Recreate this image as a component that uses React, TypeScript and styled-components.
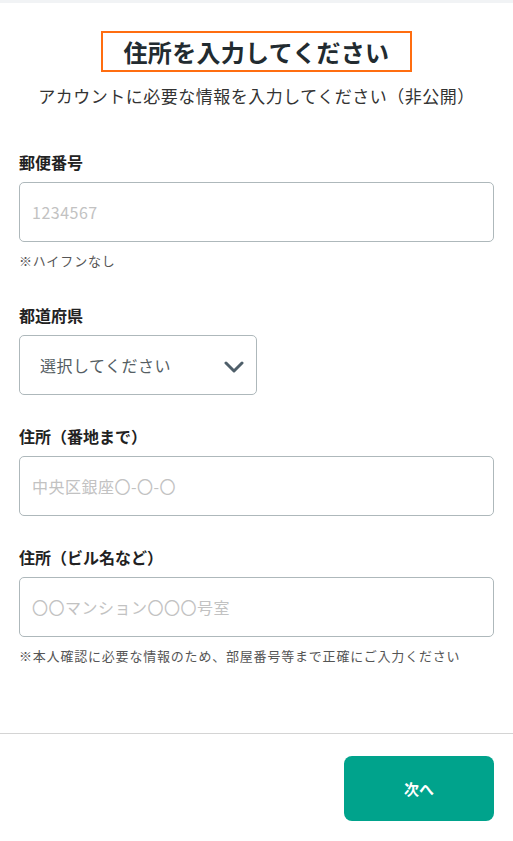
import React from 'react';
import styled, { createGlobalStyle } from 'styled-components';

const GlobalStyle = createGlobalStyle`
  * {
    box-sizing: border-box;
  }
  body {
    margin: 0;
    background: #ffffff;
    font-family: "Noto Sans CJK JP", "Noto Sans", sans-serif;
    color: #222;
  }
`;

const Page = styled.div`
  width: 513px;
  min-height: 841px;
  border-top: 3px solid #f1f3f5;
`;

const Header = styled.header`
  display: flex;
  flex-direction: column;
  align-items: center;
  padding-top: 28px;
`;

const TitleBox = styled.div`
  border: 2px solid #ff6d10;
  height: 41px;
  padding: 0 21px;
  display: flex;
  align-items: center;
`;

const Title = styled.h1`
  margin: 0;
  font-size: 24px;
  font-weight: 700;
  line-height: 1;
  letter-spacing: 0.3px;
  color: #222b30;
`;

const Subtitle = styled.p`
  margin: 12px 0 0;
  font-size: 17px;
  line-height: 24px;
  letter-spacing: 0.5px;
  color: #333;
`;

const Form = styled.form`
  padding: 43px 19px 0;
`;

const Field = styled.div<{ $gap: number }>`
  margin-bottom: ${(p) => p.$gap}px;
`;

const Label = styled.label`
  display: block;
  font-size: 16px;
  font-weight: 700;
  line-height: 22px;
  color: #222;
  margin-bottom: 9px;
`;

const Input = styled.input`
  display: block;
  width: 100%;
  height: 60px;
  padding: 0 12px;
  border: 1px solid #aeb8bb;
  border-radius: 5px;
  font-family: inherit;
  font-size: 16px;
  letter-spacing: 0.5px;
  color: #333;
  outline: none;

  &::placeholder {
    color: #c2c2c2;
  }
`;

const SelectBox = styled.div`
  width: 238px;
  height: 60px;
  border: 1px solid #aeb8bb;
  border-radius: 5px;
  display: flex;
  align-items: center;
  justify-content: space-between;
  padding: 0 12px 0 20px;
  font-size: 16px;
  letter-spacing: 0.5px;
  color: #555e63;
`;

const Chevron = styled.svg`
  width: 20px;
  height: 12px;
  margin-top: 4px;
`;

const Note = styled.p`
  margin: 10px 0 0;
  font-size: 13px;
  line-height: 18px;
  letter-spacing: 0.8px;
  color: #555;
`;

const Divider = styled.hr`
  margin: 68px 0 0;
  border: none;
  border-top: 1px solid #d4d4d4;
`;

const Footer = styled.div`
  display: flex;
  justify-content: flex-end;
  padding: 22px 19px 0;
`;

const NextButton = styled.button`
  width: 150px;
  height: 65px;
  border: none;
  border-radius: 8px;
  background: #00a38c;
  color: #fff;
  font-family: inherit;
  font-size: 15px;
  font-weight: 700;
`;

const App: React.FC = () => {
  return (
    <>
      <GlobalStyle />
      <Page>
        <Header>
          <TitleBox>
            <Title>住所を入力してください</Title>
          </TitleBox>
          <Subtitle>アカウントに必要な情報を入力してください（非公開）</Subtitle>
        </Header>
        <Form onSubmit={(e) => e.preventDefault()}>
          <Field $gap={34}>
            <Label>郵便番号</Label>
            <Input placeholder="1234567" />
            <Note>※ハイフンなし</Note>
          </Field>
          <Field $gap={30}>
            <Label>都道府県</Label>
            <SelectBox>
              <span>選択してください</span>
              <Chevron viewBox="0 0 20 12">
                <path
                  d="M2 2 L10 10 L18 2"
                  fill="none"
                  stroke="#4f5f6a"
                  strokeWidth="3"
                  strokeLinecap="round"
                  strokeLinejoin="round"
                />
              </Chevron>
            </SelectBox>
          </Field>
          <Field $gap={30}>
            <Label>住所（番地まで）</Label>
            <Input placeholder="中央区銀座〇-〇-〇" />
          </Field>
          <Field $gap={0}>
            <Label>住所（ビル名など）</Label>
            <Input placeholder="〇〇マンション〇〇〇号室" />
            <Note>※本人確認に必要な情報のため、部屋番号等まで正確にご入力ください</Note>
          </Field>
        </Form>
        <Divider />
        <Footer>
          <NextButton type="button">次へ</NextButton>
        </Footer>
      </Page>
    </>
  );
};

export default App;
